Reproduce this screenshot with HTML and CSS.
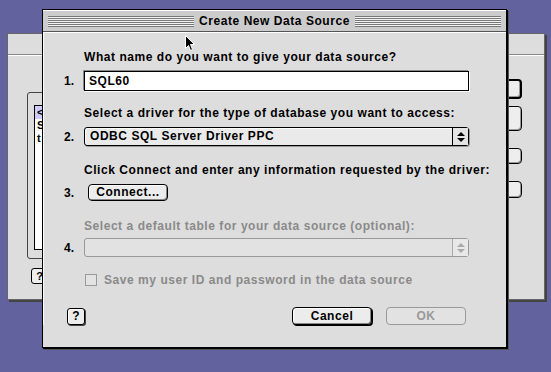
FILE: index.html
```html
<!DOCTYPE html>
<html lang="en">
<head>
  <meta charset="UTF-8">
  <title>Create New Data Source</title>
  <link rel="stylesheet" href="styles.css">
</head>
<body>
  <div class="desktop">
    <!-- ventana de fondo (ODBC Setup) -->
    <div class="back-window">
      <div class="back-title"></div>
      <div class="back-panel">
        <div class="back-list">
          <div class="back-row sel">&lt;</div>
          <div class="back-row">S</div>
          <div class="back-row">t</div>
        </div>
      </div>
      <div class="back-help">?</div>
      <div class="back-btn b1"></div>
      <div class="back-btn b2"></div>
      <div class="back-btn b3"></div>
      <div class="back-btn b4"></div>
    </div>

    <!-- dialogo principal -->
    <div class="dialog">
      <div class="titlebar">
        <span class="stripes"></span>
        <span class="title">Create New Data Source</span>
        <span class="stripes"></span>
      </div>
      <div class="content">
        <p class="label first">What name do you want to give your data source?</p>
        <div class="step">
          <span class="num">1.</span>
          <div class="textfield">SQL60</div>
        </div>

        <p class="label">Select a driver for the type of database you want to access:</p>
        <div class="step s2">
          <span class="num">2.</span>
          <div class="popup">
            <span class="popup-text">ODBC SQL Server Driver PPC</span>
            <span class="arrows"><i class="up"></i><i class="down"></i></span>
          </div>
        </div>

        <p class="label">Click Connect and enter any information requested by the driver:</p>
        <div class="step s3">
          <span class="num">3.</span>
          <button class="btn connect">Connect...</button>
        </div>

        <p class="label disabled l4">Select a default table for your data source (optional):</p>
        <div class="step s4">
          <span class="num">4.</span>
          <div class="popup off">
            <span class="popup-text"></span>
            <span class="arrows"><i class="up"></i><i class="down"></i></span>
          </div>
        </div>

        <label class="check disabled"><span class="box"></span>Save my user ID and password in the data source</label>

        <div class="footer">
          <button class="btn help">?</button>
          <div class="actions">
            <button class="btn cancel">Cancel</button>
            <button class="btn ok" disabled>OK</button>
          </div>
        </div>
      </div>
    </div>

    <svg class="cursor" width="11" height="17" viewBox="0 0 11 17">
      <path d="M0.5 0.5 L0.5 13.5 L3.5 10.5 L5.5 15.5 L7.5 14.5 L5.5 9.5 L9.5 9.5 Z" fill="#000" stroke="#fff" stroke-width="1"/>
    </svg>
  </div>
</body>
</html>
```

FILE: styles.css
```css
:root {
  --desk: #62629f;
  --gray: #dddddd;
  --dim: #8a8a8a;
  --font: "Liberation Sans", Arial, sans-serif;
}
* { box-sizing: border-box; margin: 0; padding: 0; }
body {
  background: var(--desk);
  font-family: var(--font);
  font-weight: bold;
  font-size: 12px;
  letter-spacing: 0.55px;
  color: #000;
  overflow: hidden;
}
.desktop {
  position: relative;
  width: 551px;
  height: 372px;
  background: var(--desk);
}

/* ventana de fondo */
.back-window {
  position: absolute;
  left: 7px;
  top: 33px;
  width: 538px;
  height: 267px;
  background: var(--gray);
  border: 1px solid #666;
  box-shadow: 2px 2px 0 #444;
}
.back-title {
  height: 21px;
  border-bottom: 1px solid #888;
  box-shadow: 0 1px 0 #fff;
}
.back-panel {
  position: absolute;
  left: 19px;
  top: 58px;
  width: 60px;
  height: 167px;
  border: 1px solid #444;
  border-radius: 3px;
}
.back-list {
  margin: 12px 0 0 6px;
  height: 145px;
  background: #fff;
  border: 1px solid #000;
  font-size: 11px;
}
.back-row { height: 13px; line-height: 13px; padding-left: 2px; }
.back-row.sel { background: #ccccff; }
.back-help {
  position: absolute;
  left: 23px;
  top: 234px;
  width: 18px;
  height: 16px;
  border: 1px solid #000;
  border-radius: 3px;
  background: #eee;
  text-align: center;
  line-height: 14px;
  font-size: 11px;
}
.back-btn {
  position: absolute;
  left: 490px;
  width: 24px;
  border: 1px solid #000;
  border-radius: 4px;
  background: #eee;
  box-shadow: inset -1px -1px 0 #999;
}
.b1 { top: 45px; height: 20px; border-width: 2px; }
.b2 { top: 72px; height: 25px; }
.b3 { top: 114px; height: 16px; }
.b4 { top: 147px; height: 17px; }

/* dialogo */
.dialog {
  position: absolute;
  left: 42px;
  top: 9px;
  width: 465px;
  height: 339px;
  background: var(--gray);
  border: 1px solid #000;
  box-shadow: 1px 1px 0 #000, 2px 2px 0 #555;
}
.titlebar {
  height: 22px;
  display: flex;
  align-items: center;
  gap: 4px;
  padding: 0 5px;
  background: #cccccc;
  border-top: 1px solid #fff;
  border-bottom: 1px solid #555;
}
.stripes {
  flex: 1;
  height: 11px;
  background: repeating-linear-gradient(to bottom, #777 0 1px, #f4f4f4 1px 2px);
}
.title { font-size: 12px; padding: 0 1px; }

.content {
  padding: 0 0 0 20px;
  border-top: 1px solid #fff;
  border-left: 1px solid #fff;
}
.label {
  height: 16px;
  line-height: 16px;
  margin: 14px 0 6px 20px;
  white-space: nowrap;
}
.label.first { margin-top: 16px; }
.label.l4 { margin-top: 17px; margin-bottom: 4px; }
.disabled { color: var(--dim); }
.step {
  display: grid;
  grid-template-columns: 20px 385px;
  align-items: center;
}
.num { font-size: 12px; letter-spacing: 0; }
.s2 { margin-bottom: 16px; }
.s2, .s4 { margin-top: 1px; }
.s3 { margin-top: 6px; }

.textfield {
  height: 20px;
  background: #fff;
  border: 1px solid #000;
  box-shadow: -1px -1px 0 #888, 1px 1px 0 #fff;
  padding-left: 4px;
  line-height: 18px;
}
.popup {
  height: 19px;
  display: flex;
  border: 1px solid #000;
  border-radius: 3px;
  background: #eaeaea;
  box-shadow: inset 1px 1px 0 #fff, 1px 1px 0 #999;
}
.popup-text { flex: 1; padding-left: 5px; line-height: 17px; }
.arrows {
  width: 16px;
  border-left: 1px solid #000;
  display: flex;
  flex-direction: column;
  align-items: center;
  justify-content: center;
  gap: 2px;
  background: #e4e4e4;
}
.arrows i {
  display: block;
  width: 0;
  height: 0;
  border-left: 4px solid transparent;
  border-right: 4px solid transparent;
}
.arrows .up { border-bottom: 4px solid #000; }
.arrows .down { border-top: 4px solid #000; }
.popup.off { border-color: #999; box-shadow: none; background: #e2e2e2; }
.popup.off .arrows { border-left-color: #aaa; background: #e8e8e8; }
.popup.off .up { border-bottom-color: #aaa; }
.popup.off .down { border-top-color: #aaa; }

.btn {
  font-family: var(--font);
  font-weight: bold;
  font-size: 12px;
  letter-spacing: 0.55px;
  height: 18px;
  border: 1px solid #000;
  border-radius: 4px;
  background: #ececec;
  box-shadow: inset 1px 1px 0 #fff, inset -1px -1px 0 #888;
  color: #000;
  line-height: 15px;
}
.connect { width: 80px; margin-left: 4px; justify-self: start; height: 17px; }

.check {
  display: flex;
  align-items: center;
  gap: 7px;
  margin: 15px 0 0 21px;
  height: 16px;
}
.box {
  width: 12px;
  height: 12px;
  border: 1px solid #999;
  background: #e2e2e2;
}

.footer {
  display: flex;
  align-items: center;
  margin-top: 19px;
}
.help {
  width: 18px;
  height: 17px;
  margin-left: 3px;
  border-radius: 3px;
  letter-spacing: 0;
  box-shadow: inset 1px 1px 0 #fff, 1px 1px 0 #444;
}
.actions {
  margin-left: auto;
  margin-right: 40px;
  display: flex;
  gap: 14px;
}
.cancel, .ok { width: 80px; }
.cancel { box-shadow: inset 1px 1px 0 #fff, 1px 1px 0 #000, inset -1px -1px 0 #888; }
.ok { border-color: #999; color: #999; box-shadow: none; background: #e2e2e2; }

.cursor {
  position: absolute;
  left: 185px;
  top: 35px;
}
```
